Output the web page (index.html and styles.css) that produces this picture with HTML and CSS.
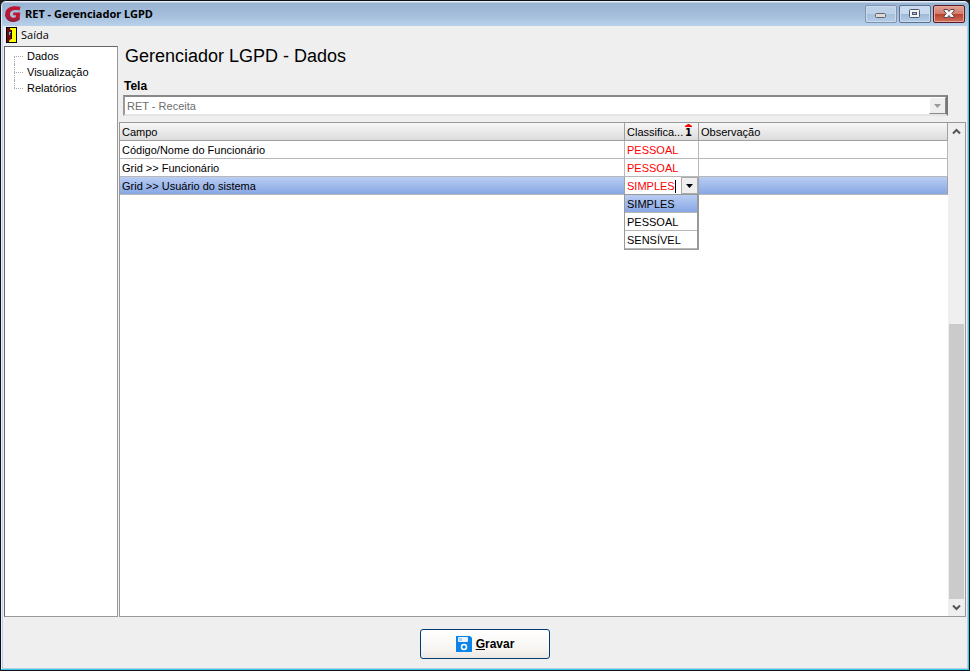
FILE: index.html
```html
<!DOCTYPE html>
<html lang="pt-BR">
<head>
<meta charset="utf-8">
<title>RET - Gerenciador LGPD</title>
<link rel="stylesheet" href="styles.css">
</head>
<body>
<div class="window">
  <header class="titlebar">
    <svg class="logo" viewBox="0 0 16 16" aria-hidden="true"><path d="M15.500 .8C8 -1 .3 1 .2 8C.2 13.500 4.500 16.300 9 15.800C11.500 15.500 13.500 14.500 14.500 13.500L15.300 6.500H8.500L8 9.200H11L10.700 11.300C7.500 12.500 5 11 5 8.300C5 4.300 9.500 3.300 14.500 4.500Z" fill="#bb1733"/><path d="M.2 8C.2 13.500 4.500 16.300 9 15.800C11.500 15.500 13.500 14.500 14.500 13.500L14.700 11.500C9 15 3 13.500 .2 8Z" fill="#8e2340"/></svg>
    <h1 class="caption">RET - Gerenciador LGPD</h1>
    <button class="winbtn" type="button" aria-label="Minimizar"><svg viewBox="0 0 14 12"><rect x="1.500" y="5.500" width="10" height="4" rx="1" fill="#dedbd6" stroke="#5b6470"/></svg></button>
    <button class="winbtn winbtn-max" type="button" aria-label="Maximizar"><svg viewBox="0 0 14 12"><rect x="1.500" y="1.500" width="10" height="8" rx="1" fill="#f2f2f2" stroke="#4c566a"/><rect x="4.500" y="4.500" width="4" height="2" fill="#a9c1dc" stroke="#4c566a"/></svg></button>
    <button class="winbtn winbtn-close" type="button" aria-label="Fechar"><svg viewBox="0 0 14 12"><path d="M2 1.500H5.500L7 3.500L8.500 1.500H12V3L9.700 5.500L12 8V9.500H8.500L7 7.500L5.500 9.500H2V8L4.300 5.500L2 3Z" fill="#f5f5f5" stroke="#5a4650"/></svg></button>
  </header>
  <nav class="menubar">
    <button class="menuitem" type="button">
      <svg class="door" viewBox="0 0 11 16" aria-hidden="true"><path d="M0 0H11V16H0Z" fill="#000"/><path d="M4 1H10V15H3V13H4Z" fill="#ff0"/><path d="M1 1H3L5 3V12L2 15H1Z" fill="#7b0808"/><path d="M5 3H6V12H5Z" fill="#000"/><path d="M3 5H5V6H4V8H3Z" fill="#48d8d0"/></svg>
      Saída
    </button>
  </nav>
  <div class="workspace">
    <aside class="tree">
      <ul>
        <li><a href="#dados">Dados</a></li>
        <li><a href="#visualizacao">Visualização</a></li>
        <li><a href="#relatorios">Relatórios</a></li>
      </ul>
    </aside>
    <main class="content">
      <h2 class="heading">Gerenciador LGPD - Dados</h2>
      <label class="label" for="tela">Tela</label>
      <div class="field">
        <select id="tela" disabled><option>RET - Receita</option></select>
        <span class="field-arrow"><svg viewBox="0 0 7 4" aria-hidden="true"><path d="M0 0H7L3.500 4Z" fill="#9a9a9a"/></svg></span>
      </div>
      <div class="grid">
        <div class="grid-view">
          <table>
            <colgroup><col><col class="col-class"><col class="col-obs"></colgroup>
            <thead>
              <tr><th>Campo</th><th><span class="sorthead">Classifica... <span class="sort"><svg viewBox="0 0 7 3" aria-hidden="true"><path d="M3 0H4L7 2V3H0V2Z" fill="#f00"/></svg>1</span></span></th><th>Observação</th></tr>
            </thead>
            <tbody>
              <tr><td>Código/Nome do Funcionário</td><td class="red">PESSOAL</td><td></td></tr>
              <tr><td>Grid &gt;&gt; Funcionário</td><td class="red">PESSOAL</td><td></td></tr>
              <tr class="selected"><td>Grid &gt;&gt; Usuário do sistema</td>
                <td class="editor">
                  <div class="combo">
                    <div class="combo-text"><input type="text" value="SIMPLES" size="7" aria-label="Classificação" role="combobox" aria-expanded="true" aria-controls="opcoes"><i class="caret"></i></div>
                    <button type="button" aria-label="Abrir lista"><svg viewBox="0 0 7 4"><path d="M0 0H7L3.500 4Z" fill="#000"/></svg></button>
                    <ul class="options" id="opcoes" role="listbox">
                      <li class="active" role="option" aria-selected="true">SIMPLES</li>
                      <li role="option">PESSOAL</li>
                      <li role="option">SENSÍVEL</li>
                    </ul>
                  </div>
                </td><td></td></tr>
            </tbody>
          </table>
        </div>
        <div class="scrollbar">
          <button type="button" aria-label="Rolar para cima"><svg viewBox="0 0 9 7"><path d="M1 5.500L4.500 2L8 5.500" fill="none" stroke="#555" stroke-width="2"/></svg></button>
          <div class="track"><div class="thumb"></div></div>
          <button type="button" aria-label="Rolar para baixo"><svg viewBox="0 0 9 7"><path d="M1 1.500L4.500 5L8 1.500" fill="none" stroke="#555" stroke-width="2"/></svg></button>
        </div>
      </div>
    </main>
  </div>
  <footer class="actions">
    <button class="save" type="button">
      <svg viewBox="0 0 16 16" aria-hidden="true"><path d="M0 0H14L16 2V16H0Z" fill="#0a84e8"/><rect x="2" y="1" width="10" height="5" rx="1" fill="#e8f3fd"/><rect x="3" y="2" width="3" height="3" fill="#a8d2f7"/><circle cx="8" cy="11" r="2.500" fill="#0a84e8" stroke="#fff" stroke-width="1.500"/></svg>
      <span><u>G</u>ravar</span>
    </button>
  </footer>
</div>
</body>
</html>
```
FILE: styles.css
```css
* { box-sizing: border-box; }
body {
  margin: 0;
  background: #1b1b1f;
  color: #000;
  font: 11px/16px "Liberation Sans", Arial, sans-serif;
}
button, input, select { font: inherit; color: inherit; margin: 0; padding: 0; border: 0; border-radius: 0; }
ul { list-style: none; margin: 0; padding: 0; }
svg { display: block; }

.window {
  display: flex;
  flex-direction: column;
  height: 100vh;
  padding: 0 2px 2px;
  border: 1px solid #101014;
  border-radius: 6px 6px 0 0;
  background: #efefef;
  box-shadow: inset -1px -1px #35c9e8, inset 1px 1px #e8f1fa, inset -2px -2px #b9cfe8, inset 2px 0 #b9d1ea;
}

/* Title bar */
.titlebar {
  display: flex;
  align-items: center;
  height: 25px;
  margin: 0 -1px;
  padding: 1px 3px 0 3px;
  border-radius: 5px 5px 0 0;
  background: linear-gradient(#e4eef8 1px, #98b3d2 2px, #a5bfdc 60%, #b9d1ea);
}
.logo { width: 16px; height: 16px; }
.caption {
  flex: 1;
  margin: 0 0 0 4px;
  font: bold 11px/16px "Noto Sans", "Open Sans", sans-serif;
}
.winbtn {
  display: grid;
  place-items: center;
  width: 32px;
  height: 18px;
  margin-left: 2px;
  border: 1px solid #8195b0;
  border-radius: 2px;
  background: linear-gradient(#bdd2e9 50%, #a6c0dc 50%, #b4cce6);
  box-shadow: inset 0 0 0 1px #c9dbed;
}
.winbtn svg { width: 14px; height: 12px; }
.winbtn-max { border-color: #5c7290; background: linear-gradient(#c8daed 50%, #9db8d6 50%, #b6cee8); }
.winbtn-close {
  border-color: #5a1a22;
  background: linear-gradient(#e0a093 0, #d27c6d 48%, #b9402c 50%, #cf705a);
  box-shadow: inset 0 0 0 1px #e3a79b;
}

/* Menu */
.menubar { display: flex; height: 20px; padding: 1px 0 0 3px; }
.menuitem {
  display: flex;
  align-items: center;
  gap: 4px;
  height: 16px;
  background: none;
  font: 11px/16px "Open Sans", "Noto Sans", sans-serif;
}
.door { width: 11px; height: 16px; }

/* Work area */
.workspace { display: flex; gap: 1px; flex: 1; min-height: 0; padding: 0 1px; }
.tree {
  flex: none;
  width: 114px;
  padding: 1px 0 0 9px;
  border: 1px solid #999;
  border-top-color: #666;
  border-left-color: #666;
  background: #fff;
}
.tree li { display: flex; position: relative; align-items: center; height: 16px; }
.tree li::before { content: ""; width: 9px; margin-right: 4px; border-top: 1px dotted #aaa; }
.tree li::after {
  content: "";
  position: absolute;
  inset: 0 auto 0 0;
  border-left: 1px dotted #aaa;
}
.tree li:first-child::after { top: 50%; }
.tree li:last-child::after { bottom: 50%; }
.tree a { color: inherit; text-decoration: none; }

.content { display: flex; flex-direction: column; flex: 1; min-width: 0; }
.heading { margin: 0 0 0 6px; font-size: 18px; font-weight: normal; line-height: 21px; }
.label { margin: 11px 0 1px 5px; font-size: 12px; font-weight: bold; line-height: 16px; }
.field {
  display: flex;
  height: 21px;
  margin: 0 18px 6px 4px;
  border: 2px solid;
  border-color: #888 #777 #e4e4e4 #999;
  background: #fff;
}
.field select { flex: 1; appearance: none; padding-left: 2px; background: none; color: #6d6d6d; opacity: 1; }
.field-arrow {
  display: grid;
  place-items: center;
  width: 17px;
  border: 1px solid;
  border-color: #fff #888 #888 #fff;
  background: #efefef;
}
.field-arrow svg, .combo svg { width: 7px; height: 4px; }

/* Data grid */
.grid { display: flex; flex: 1; min-height: 0; border: 1px solid #999; background: #fff; }
.grid-view { flex: 1; min-width: 0; }
table { width: 100%; table-layout: fixed; border-collapse: separate; border-spacing: 0; }
.col-class { width: 74px; }
.col-obs { width: 249px; }
th, td {
  height: 18px;
  padding: 1px 2px 0;
  border: solid #a0a0a0;
  border-width: 0 1px 1px 0;
  text-align: left;
  font-weight: normal;
  line-height: 16px;
  white-space: nowrap;
}
th { background: linear-gradient(#f7f7f7, #dcdcdc); }
td { border-color: #b8b8b8; }
.red { color: #f00; }
.selected td { border-right-color: #a0a0a0; background: linear-gradient(#b9cdf4, #88a7e4); }
.sorthead { display: flex; justify-content: space-between; }
.sort { position: relative; height: 16px; padding-right: 4px; font: bold 10px/18px "DejaVu Sans", sans-serif; }
.sort svg { position: absolute; top: 0; left: 0; width: 7px; height: 3px; }
.selected .editor { padding: 0; background: #fff; }

.combo { display: flex; position: relative; height: 17px; }
.combo-text { display: flex; align-items: center; flex: 1; min-width: 0; padding: 1px 0 0 2px; }
.combo input { field-sizing: content; outline: 0; background: none; color: #f00; }
.caret { width: 1px; height: 13px; background: #000; }
.combo button { display: grid; place-items: center; width: 17px; border: 1px solid #aaa; background: #efefef; }
.options {
  position: absolute;
  top: 17px;
  right: -1px;
  left: -1px;
  z-index: 1;
  border: 1px solid #999;
  border-right-width: 2px;
  background: #fff;
}
.options li { height: 18px; padding: 1px 0 0 2px; border-bottom: 1px solid #b8b8b8; line-height: 16px; }
.options .active { background: linear-gradient(#b9cdf4, #88a7e4); }

.scrollbar { display: flex; flex-direction: column; width: 17px; padding: 0 1px; background: #efefef; }
.scrollbar button { display: grid; place-items: center; height: 17px; background: none; }
.scrollbar svg { width: 9px; height: 7px; }
.track { display: flex; align-items: flex-end; flex: 1; }
.thumb { width: 100%; height: 60%; background: #cbcbcb; }

/* Footer */
.actions { display: flex; flex: none; justify-content: center; padding: 12px 0 9px; }
.save {
  display: flex;
  align-items: center;
  justify-content: center;
  gap: 4px;
  width: 130px;
  height: 30px;
  border: 1px solid #003c74;
  border-radius: 3px;
  background: linear-gradient(#fff, #f7f5f2 70%, #ece7e1);
  font-size: 12px;
  font-weight: bold;
}
.save svg { width: 16px; height: 16px; }
```
